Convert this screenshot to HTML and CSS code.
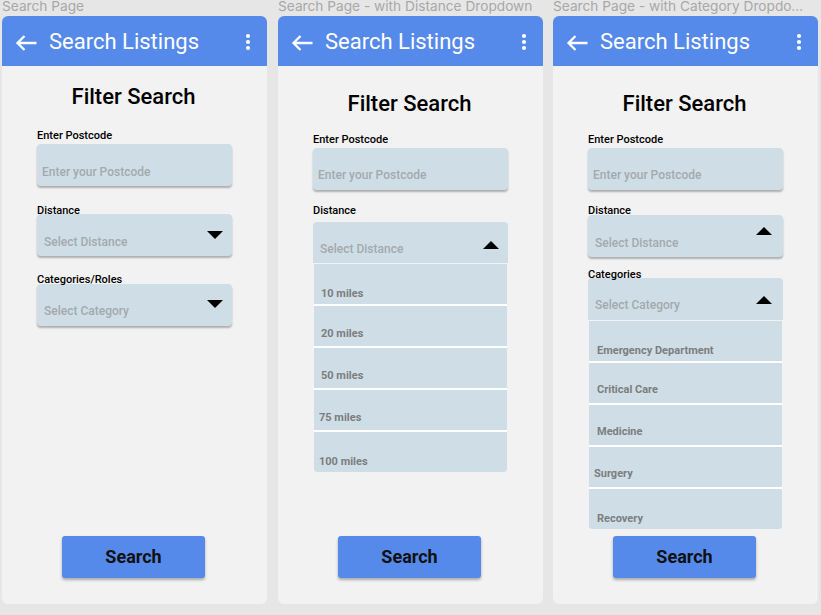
FILE: index.html
```html
<!DOCTYPE html>
<html lang="en">
<head>
<meta charset="utf-8">
<title>Search Listings</title>
<link rel="stylesheet" href="styles.css">
</head>
<body>
<div class="canvas">

  <section class="col">
    <div class="frame-name">Search Page</div>
    <div class="frame">
      <header class="appbar">
        <svg class="back" width="22" height="16" viewBox="0 0 22 16"><path d="M21.5 8H2.5M9.5 1L2.5 8L9.5 15" fill="none" stroke="#fff" stroke-width="2.3"/></svg>
        <span class="appbar-title">Search Listings</span>
        <svg class="more" width="6" height="18" viewBox="0 0 6 18"><circle cx="3" cy="3" r="2.1" fill="#fff"/><circle cx="3" cy="9" r="2.1" fill="#fff"/><circle cx="3" cy="15" r="2.1" fill="#fff"/></svg>
      </header>
      <div class="body">
        <h1 class="title t1">Filter Search</h1>
        <div class="label f1-l1">Enter Postcode</div>
        <div class="field f1-b1"><span class="ph ph-code">Enter your Postcode</span></div>
        <div class="label f1-l2">Distance</div>
        <div class="field f1-b2"><span class="ph">Select Distance</span><span class="tri down"></span></div>
        <div class="label f1-l3">Categories/Roles</div>
        <div class="field f1-b3"><span class="ph">Select Category</span><span class="tri down d2"></span></div>
        <button class="search">Search</button>
      </div>
    </div>
  </section>

  <section class="col">
    <div class="frame-name">Search Page - with Distance Dropdown</div>
    <div class="frame">
      <header class="appbar">
        <svg class="back" width="22" height="16" viewBox="0 0 22 16"><path d="M21.5 8H2.5M9.5 1L2.5 8L9.5 15" fill="none" stroke="#fff" stroke-width="2.3"/></svg>
        <span class="appbar-title">Search Listings</span>
        <svg class="more" width="6" height="18" viewBox="0 0 6 18"><circle cx="3" cy="3" r="2.1" fill="#fff"/><circle cx="3" cy="9" r="2.1" fill="#fff"/><circle cx="3" cy="15" r="2.1" fill="#fff"/></svg>
      </header>
      <div class="body">
        <h1 class="title t2">Filter Search</h1>
        <div class="label f2-l1">Enter Postcode</div>
        <div class="field f2-b1"><span class="ph ph-code">Enter your Postcode</span></div>
        <div class="label f2-l2">Distance</div>
        <div class="field open f2-b2"><span class="ph">Select Distance</span><span class="tri up u2"></span></div>
        <ul class="menu">
          <li>10 miles</li>
          <li>20 miles</li>
          <li>50 miles</li>
          <li class="shift">75 miles</li>
          <li class="shift">100 miles</li>
        </ul>
        <button class="search">Search</button>
      </div>
    </div>
  </section>

  <section class="col">
    <div class="frame-name clip">Search Page - with Category Dropdown</div>
    <div class="frame">
      <header class="appbar">
        <svg class="back" width="22" height="16" viewBox="0 0 22 16"><path d="M21.5 8H2.5M9.5 1L2.5 8L9.5 15" fill="none" stroke="#fff" stroke-width="2.3"/></svg>
        <span class="appbar-title">Search Listings</span>
        <svg class="more" width="6" height="18" viewBox="0 0 6 18"><circle cx="3" cy="3" r="2.1" fill="#fff"/><circle cx="3" cy="9" r="2.1" fill="#fff"/><circle cx="3" cy="15" r="2.1" fill="#fff"/></svg>
      </header>
      <div class="body">
        <h1 class="title t2">Filter Search</h1>
        <div class="label f2-l1">Enter Postcode</div>
        <div class="field f2-b1"><span class="ph ph-code">Enter your Postcode</span></div>
        <div class="label f3-l2">Distance</div>
        <div class="field f3-b2 wide-r"><span class="ph ph-lo">Select Distance</span><span class="tri up u3"></span></div>
        <div class="label f3-l3">Categories</div>
        <div class="field open f3-b3 wide-r"><span class="ph">Select Category</span><span class="tri up u2"></span></div>
        <ul class="menu m3">
          <li>Emergency Department</li>
          <li>Critical Care</li>
          <li>Medicine</li>
          <li class="shift2">Surgery</li>
          <li>Recovery</li>
        </ul>
        <button class="search">Search</button>
      </div>
    </div>
  </section>

</div>
</body>
</html>
```

FILE: styles.css
```css
* { box-sizing: border-box; }

html, body {
  margin: 0;
  padding: 0;
  background: #e6e6e6;
  font-family: Roboto, "Liberation Sans", Arial, sans-serif;
}

.canvas {
  display: flex;
  gap: 11px;
  padding-left: 2px;
  width: 821px;
  height: 615px;
  overflow: hidden;
}

.col {
  width: 265px;
  flex: 0 0 265px;
  display: flex;
  flex-direction: column;
}
.col:last-child { margin-left: -1px; }

.frame-name {
  font-family: Inter, Roboto, sans-serif;
  font-size: 13.7px;
  line-height: 16px;
  height: 16px;
  margin-top: -2px;
  margin-bottom: 2px;
  color: #a8a8a8;
  white-space: nowrap;
  overflow: hidden;
  text-overflow: ellipsis;
  max-width: 259px;
}
.frame-name.clip { max-width: 253px; }

.frame {
  height: 588px;
  background: #f2f2f2;
  border-radius: 6px;
  display: flex;
  flex-direction: column;
  overflow: hidden;
}

.appbar {
  height: 50px;
  background: #568aea;
  display: flex;
  align-items: center;
  padding: 0 16px 0 13px;
  color: #fff;
  flex: 0 0 50px;
}

.back { display: block; margin-top: 3px; }

.appbar-title {
  font-size: 22px;
  line-height: 26px;
  font-weight: 400;
  margin-left: 12px;
  margin-top: 2px;
}

.more { display: block; margin-left: auto; margin-top: 1px; }

.body {
  flex: 1;
  display: flex;
  flex-direction: column;
  padding: 0 35px;
}

.title {
  margin: 0;
  font-size: 22px;
  line-height: 26px;
  font-weight: 500;
  color: #000;
  text-align: center;
  padding-right: 2px;
}
.t1 { margin-top: 18px; }
.t2 { margin-top: 25px; }

.label {
  font-size: 11px;
  line-height: 13px;
  font-weight: 500;
  color: #000;
  position: relative;
  z-index: 1;
}

.field {
  width: 195px;
  height: 42px;
  background: #cfdee6;
  border-radius: 4px;
  box-shadow: 0 2px 2px rgba(0, 0, 0, 0.28);
  display: flex;
  align-items: flex-start;
  justify-content: space-between;
  padding: 0 9px 0 7px;
}
.field.open {
  box-shadow: none;
  border-radius: 4px 4px 0 0;
}
.wide-r { padding-right: 11px; }

.ph {
  font-size: 12px;
  line-height: 14px;
  font-weight: 500;
  color: #a3a9ad;
  margin-top: 20px;
  white-space: nowrap;
}
.ph-code { margin-left: -2px; }
.ph-lo { margin-top: 21px; }
.f1-b1 .ph, .f1-b2 .ph { margin-top: 21px; }

.tri {
  width: 0;
  height: 0;
  border-left: 8.5px solid transparent;
  border-right: 8.5px solid transparent;
}
.tri.down { border-top: 8px solid #000; margin-top: 17px; }
.tri.down.d2 { margin-top: 16px; }
.tri.up { border-bottom: 8px solid #000; }
.tri.u2 { margin-top: 19px; }
.tri.u3 { margin-top: 12px; }

/* frame 1 spacing */
.f1-l1 { margin-top: 19px; }
.f1-b1 { margin-top: 2px; }
.f1-l2 { margin-top: 18px; }
.f1-b2 { margin-top: -3px; }
.f1-l3 { margin-top: 17px; }
.f1-b3 { margin-top: -2px; }

/* frame 2 spacing */
.f2-l1 { margin-top: 16px; }
.f2-b1 { margin-top: 2px; }
.f2-l2 { margin-top: 14px; }
.f2-b2 { margin-top: 5px; height: 41px; }

/* frame 3 spacing */
.f3-l2 { margin-top: 14px; }
.f3-b2 { margin-top: -2px; }
.f3-l3 { margin-top: 11px; }
.f3-b3 { margin-top: -3px; }
.f3-b3 .tri.u2 { margin-top: 18px; }

.menu {
  list-style: none;
  margin: 1px 1px 0;
  padding: 0;
  width: 193px;
  display: flex;
  flex-direction: column;
  gap: 2px;
  background: #ffffff;
  border-radius: 0 0 3px 3px;
  overflow: hidden;
}
.menu li {
  height: 40px;
  background: #cfdee6;
  font-size: 11px;
  line-height: 13px;
  font-weight: 700;
  color: #7b7d7f;
  padding: 21px 0 0 7px;
}
.menu li:first-child { padding-top: 23px; }
.menu li:last-child { padding-top: 23px; }
.menu li.shift { padding-left: 5px; }
.m3 li { padding-left: 8px; padding-top: 20px; }
.m3 li.shift2 { padding-left: 5px; }

.search {
  margin: auto 0 26px 25px;
  width: 143px;
  height: 42px;
  border: 0;
  border-radius: 3px;
  background: #568aea;
  box-shadow: 0 2px 3px rgba(0, 0, 0, 0.3);
  font-family: Roboto, "Liberation Sans", Arial, sans-serif;
  font-size: 18px;
  line-height: 42px;
  font-weight: 700;
  color: #111;
  padding: 0;
}
```
